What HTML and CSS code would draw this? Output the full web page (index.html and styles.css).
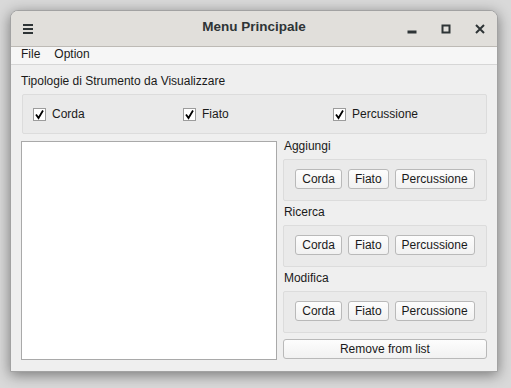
FILE: index.html
```html
<!DOCTYPE html>
<html>
<head>
<meta charset="utf-8">
<link rel="stylesheet" href="styles.css">
</head>
<body>
<div class="window">
  <div class="titlebar">
    <svg class="hamb" width="10" height="10" viewBox="0 0 10 10"><rect x="0" y="0" width="10" height="2"/><rect x="0" y="4" width="10" height="2"/><rect x="0" y="8" width="10" height="2"/></svg>
    <div class="title">Menu Principale</div>
    <div class="controls">
      <svg width="10" height="10" viewBox="0 0 10 10"><rect x="1" y="7" width="8" height="2"/></svg>
      <svg width="10" height="10" viewBox="0 0 10 10"><rect x="1.5" y="1.5" width="7" height="7" fill="none" stroke-width="2"/></svg>
      <svg width="10" height="10" viewBox="0 0 10 10"><path d="M1 1 L9 9 M9 1 L1 9" stroke-width="2" fill="none"/></svg>
    </div>
  </div>
  <div class="menubar"><span>File</span><span>Option</span></div>
  <div class="content">
    <div class="toplabel">Tipologie di Strumento da Visualizzare</div>
    <div class="checkgroup">
      <label class="check"><span class="box"><svg width="11" height="11" viewBox="0 0 11 11"><path d="M2 5.5 L4.5 9 L9 1.5" fill="none" stroke="#000" stroke-width="1.8"/></svg></span>Corda</label>
      <label class="check"><span class="box"><svg width="11" height="11" viewBox="0 0 11 11"><path d="M2 5.5 L4.5 9 L9 1.5" fill="none" stroke="#000" stroke-width="1.8"/></svg></span>Fiato</label>
      <label class="check"><span class="box"><svg width="11" height="11" viewBox="0 0 11 11"><path d="M2 5.5 L4.5 9 L9 1.5" fill="none" stroke="#000" stroke-width="1.8"/></svg></span>Percussione</label>
    </div>
    <div class="main">
      <div class="list"></div>
      <div class="side">
        <div class="seclabel">Aggiungi</div>
        <div class="btngroup"><button>Corda</button><button>Fiato</button><button>Percussione</button></div>
        <div class="seclabel">Ricerca</div>
        <div class="btngroup"><button>Corda</button><button>Fiato</button><button>Percussione</button></div>
        <div class="seclabel">Modifica</div>
        <div class="btngroup last"><button>Corda</button><button>Fiato</button><button>Percussione</button></div>
        <button class="remove">Remove from list</button>
      </div>
    </div>
  </div>
</div>
</body>
</html>
```
FILE: styles.css
```css
* { box-sizing: border-box; }
html, body { margin: 0; padding: 0; }
body {
  background: #d9d9d9;
  padding: 10px 0 0 10px;
  font-family: "Liberation Sans", Arial, sans-serif;
  font-size: 12px;
  color: #1a1a1a;
  width: 511px;
  height: 388px;
  overflow: hidden;
}
.window {
  width: 488px;
  height: 362px;
  border: 1px solid #a2a2a2;
  border-radius: 8px 8px 0 0;
  background: #efefef;
  box-shadow: 0 3px 14px rgba(0,0,0,0.45);
  display: flex;
  flex-direction: column;
  overflow: hidden;
}
.titlebar {
  height: 36px;
  flex: none;
  background: #e1dfdb;
  border-bottom: 1px solid #bdbab5;
  display: flex;
  align-items: center;
  position: relative;
  padding: 0 12px 0 12px;
}
.hamb { fill: #2e3436; margin-top: 1px; }
.title {
  position: absolute;
  left: 0; right: 0; top: 0; bottom: 0;
  display: flex; align-items: center; justify-content: center;
  padding-bottom: 5px;
  font-weight: bold;
  font-size: 13.5px;
  color: #2e3436;
  pointer-events: none;
}
.controls {
  margin-left: auto;
  display: flex;
  gap: 24px;
  align-items: center;
}
.controls svg { fill: #2e3436; stroke: #2e3436; margin-top: 1px; }
.menubar {
  height: 18px;
  flex: none;
  background: #f6f6f6;
  border-bottom: 1px solid #d6d6d6;
  display: flex;
  gap: 14px;
  padding: 0 0 3px 10px;
  align-items: center;
  font-size: 12px;
}
.content {
  flex: 1;
  padding: 9px 10px 11px 10px;
  display: flex;
  flex-direction: column;
}
.toplabel { line-height: 14px; height: 14px; margin-bottom: 6px; }
.checkgroup {
  height: 40px;
  margin: 0 0 0 1px;
  border: 1px solid #dcdcdc;
  border-radius: 2px;
  background: #eaeaea;
  display: grid;
  grid-template-columns: 150px 150px 150px;
  padding-left: 10px;
  align-items: center;
}
.check { display: flex; align-items: center; gap: 6px; }
.box {
  width: 13px; height: 13px;
  border: 1px solid #9c9c9c;
  background: #fff;
  display: flex; align-items: center; justify-content: center;
  margin-top: 1px;
}
.main {
  flex: 1;
  display: flex;
  gap: 6px;
  margin-top: 5px;
}
.list {
  width: 257px;
  margin-top: 2px;
  background: #fff;
  border: 1px solid #a9a9a9;
}
.side {
  width: 205px;
  display: flex;
  flex-direction: column;
}
.seclabel {
  line-height: 14px;
  height: 14px;
  margin-bottom: 6px;
  padding-left: 1px;
}
.btngroup {
  height: 42px;
  border: 1px solid #dcdcdc;
  border-radius: 2px;
  background: #eaeaea;
  display: flex;
  justify-content: center;
  gap: 6px;
  padding-top: 9px;
  margin-bottom: 4px;
}
.btngroup.last { margin-bottom: 6px; }
button {
  font-family: "Liberation Sans", Arial, sans-serif;
  font-size: 12px;
  color: #1a1a1a;
  height: 20px;
  padding: 0 6px;
  border: 1px solid #b9b9b9;
  border-radius: 3px;
  background: linear-gradient(#fdfdfd, #f1f1f1);
  line-height: 18px;
}
.remove { width: 100%; height: 20px; }
```
